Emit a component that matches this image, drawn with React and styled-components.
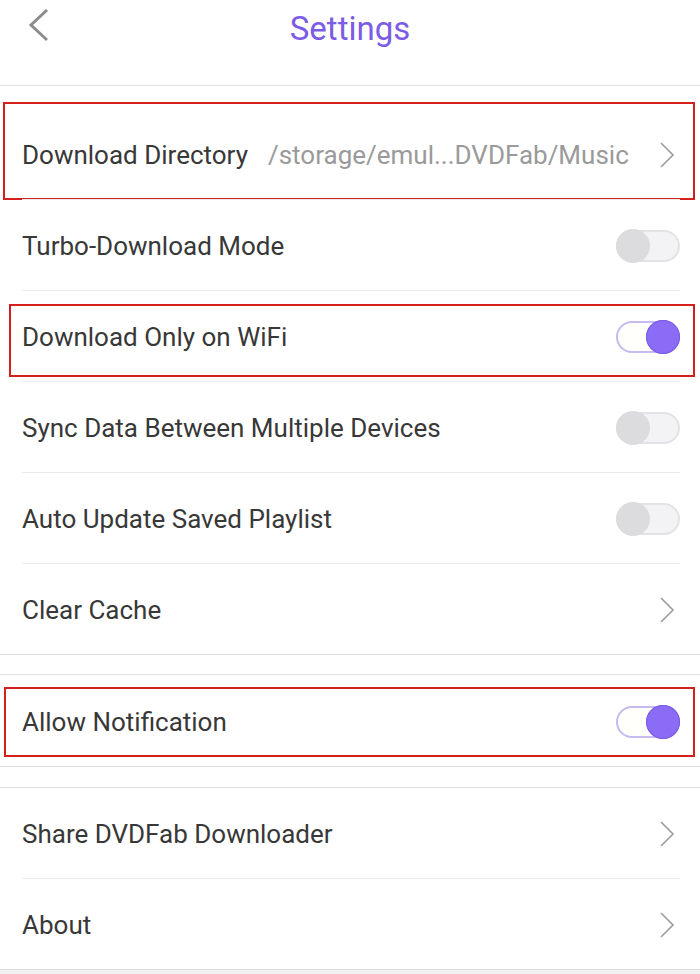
import React from 'react'
import styled, { createGlobalStyle } from 'styled-components'

const GlobalStyle = createGlobalStyle`
body {
  margin: 0;
  background: #f1f1f1;
  font-family: Roboto, "Noto Sans", sans-serif;
}
`
const Page = styled.div`
width: 700px;
background: #fff;
`
const Header = styled.header`
height: 85px;
border-bottom: 1px solid #dedede;
display: flex;
align-items: flex-start;
`
const Bar = styled.div`
position: relative;
width: 100%;
height: 56px;
display: flex;
align-items: center;
justify-content: center;
`
const Back = styled.svg`
position: absolute;
left: 26px;
top: 8px;
`
const Title = styled.h1`
margin: 0;
font-size: 33px;
font-weight: 400;
color: #7b5ce4;
`
const Section = styled.section`
border-top: ${p => (p.$first ? 'none' : '1px solid #dedede')};
border-bottom: 1px solid #dedede;
margin-top: ${p => p.$gap}px;
`
const Row = styled.div`
position: relative;
height: ${p => p.$h || 91}px;
box-sizing: border-box;
`
const Inner = styled.div`
height: 100%;
box-sizing: border-box;
margin: 0 20px 0 22px;
padding-top: 2px;
border-top: ${p => (p.$divided ? '1px solid #ebebeb' : 'none')};
display: flex;
align-items: center;
`
const Label = styled.span`
font-size: 26px;
color: #383838;
white-space: nowrap;
`
const Value = styled.span`
flex: 1;
font-size: 26px;
color: #9a9a9a;
margin-left: 20px;
white-space: nowrap;
`
const Spacer = styled.span`
flex: 1;
`
const Chevron = styled.svg`
flex: none;
margin-right: 5px;
`
const Track = styled.span`
flex: none;
width: 64px;
height: 32px;
box-sizing: border-box;
border-radius: 16px;
border: 2px solid ${p => (p.$on ? '#c6baf0' : '#e3e3e6')};
background: ${p => (p.$on ? '#fffffb' : '#f3f3f5')};
display: flex;
justify-content: ${p => (p.$on ? 'flex-end' : 'flex-start')};
align-items: center;
`
const Knob = styled.span`
width: 34px;
height: 34px;
margin: -2px;
border-radius: 50%;
background: ${p => (p.$on ? '#8b6cf6' : '#dcdcdf')};
box-shadow: ${p => (p.$on ? '0 0 0 1px #7a5ae2 inset' : 'none')};
`
const Highlight = styled.span`
position: absolute;
left: ${p => p.$left}px;
right: 5px;
top: ${p => p.$top}px;
bottom: ${p => p.$bottom}px;
border: 2px solid #d3201c;
pointer-events: none;
`

const Arrow = () => (
  <Chevron width="16" height="28" viewBox="0 0 16 28">
    <polyline points="2,2 14,14 2,26" fill="none" stroke="#9c9c9c" strokeWidth="1.6" />
  </Chevron>
)

const Toggle = ({ on }) => (
  <Track $on={on}>
    <Knob $on={on} />
  </Track>
)

const Item = ({ label, value, toggle, on, divided, h, mark }) => (
  <Row $h={h}>
    <Inner $divided={divided}>
      <Label>{label}</Label>
      {value ? <Value>{value}</Value> : <Spacer />}
      {toggle ? <Toggle on={on} /> : <Arrow />}
    </Inner>
    {mark && <Highlight $left={mark[0]} $top={mark[1]} $bottom={mark[2]} />}
  </Row>
)

export default function App() {
  return (
    <Page>
      <GlobalStyle />
      <Header>
        <Bar>
          <Back width="26" height="36" viewBox="0 0 26 36">
            <polyline points="21,2 5,17 21,32" fill="none" stroke="#8c8c8c" strokeWidth="3" />
          </Back>
          <Title>Settings</Title>
        </Bar>
      </Header>
      <Section $first $gap={22}>
        <Item label="Download Directory" value="/storage/emul...DVDFab/Music" mark={[3, -6, -1]} />
        <Item label="Turbo-Download Mode" toggle divided />
        <Item label="Download Only on WiFi" toggle on divided mark={[9, 14, 4]} />
        <Item label="Sync Data Between Multiple Devices" toggle divided />
        <Item label="Auto Update Saved Playlist" toggle divided />
        <Item label="Clear Cache" divided />
      </Section>
      <Section $gap={19}>
        <Item label="Allow Notification" toggle on mark={[4, 12, 9]} />
      </Section>
      <Section $gap={20}>
        <Item label="Share DVDFab Downloader" h={90} />
        <Item label="About" divided />
      </Section>
    </Page>
  )
}
